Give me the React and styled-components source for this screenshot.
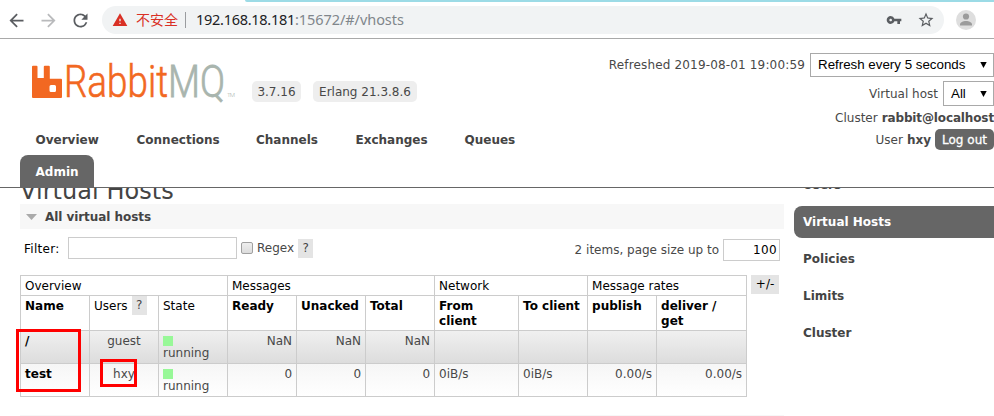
import React from 'react';
import styled, { createGlobalStyle } from 'styled-components';
import { MdArrowBack, MdArrowForward, MdRefresh, MdWarning, MdVpnKey, MdStarBorder } from 'react-icons/md';

const GlobalStyle = createGlobalStyle`
  * { box-sizing: border-box; }
  body { margin: 0; background: #fff; overflow: hidden; }
`;

const Page = styled.div`
  position: relative;
  width: 994px;
  height: 416px;
  overflow: hidden;
  background: #fff;
  color: #484848;
  font: 12px/16px 'DejaVu Sans', Verdana, sans-serif;
`;

const Text = styled.span`
  white-space: pre;
  letter-spacing: ${(p) => p.$ls || 0}px;
`;

/* Browser chrome */
const TabStrip = styled.div`
  height: 2px;
  margin-left: 245px;
  background: #9cdbe6;
  border-bottom-left-radius: 3px;
`;
const Toolbar = styled.div`
  display: flex;
  align-items: center;
  height: 37px;
  padding: 0 18px 0 0;
  border-bottom: 1px solid #a9a9a9;
`;
const NavIcon = styled.span`
  display: flex;
  justify-content: center;
  width: 32px;
  color: ${(p) => (p.$muted ? '#b9babc' : '#5a5d61')};
`;
const AddressBar = styled.div`
  display: flex;
  align-items: center;
  width: 842px;
  height: 28px;
  margin-left: 6px;
  padding: 0 9px 0 10px;
  border-radius: 14px;
  background: #f1f3f4;
  color: #5a5d61;
`;
const Insecure = styled.span`
  display: flex;
  align-items: center;
  gap: 8px;
  width: 73px;
  color: #d93025;
  white-space: nowrap;
  font: 14px/20px 'Noto Sans CJK SC', sans-serif;
  span { margin-top: -2px; }
`;
const Divider = styled.span`
  width: 1px;
  height: 16px;
  margin-right: 10px;
  background: #9a9c9f;
`;
const Url = styled.span`
  flex: 1;
  margin-top: -2px;
  color: #80868b;
  white-space: nowrap;
  letter-spacing: -0.06px;
  font: 14.5px/20px 'Noto Sans', sans-serif;
  b { font-weight: 400; color: #202124; letter-spacing: -0.28px; }
`;
const AddressActions = styled.span`
  display: flex;
  align-items: center;
  gap: 15px;
`;
const Avatar = styled.svg`
  margin-left: 12px;
`;

/* Application header */
const Header = styled.header`
  display: flex;
  justify-content: space-between;
  height: 149px;
  border-bottom: 1px solid #666;
`;
const Brand = styled.div`
  display: flex;
  align-items: flex-start;
  height: 85px;
  padding: 20px 0 0 30px;
`;
const Badge = styled.span`
  display: flex;
  align-items: center;
  justify-content: center;
  width: ${(p) => p.$w}px;
  height: 21px;
  margin: 22px 12px 0 0;
  border-radius: 5px;
  background: #eee;
`;
const Tabs = styled.nav`
  display: grid;
  grid-template-columns: 101px 119.5px 99.5px 109px 90px;
  grid-template-rows: 31px 33px;
  margin-left: 20px;
`;
const Tab = styled.a`
  display: flex;
  align-items: center;
  width: max-content;
  padding: 1px 15px 0 15.5px;
  font-weight: 700;
  color: ${(p) => (p.$active ? '#fff' : '#444')};
  background: ${(p) => (p.$active ? '#666' : 'transparent')};
  border-radius: 8px 8px 0 0;
  min-width: 74px;
`;
const Status = styled.div`
  display: flex;
  flex-direction: column;
  align-items: flex-end;
  padding-top: 14px;
`;
const StatusRow = styled.div`
  display: flex;
  align-items: center;
  gap: ${(p) => p.$gap || 5}px;
  height: ${(p) => p.$h}px;
  margin-bottom: ${(p) => p.$mb || 0}px;
`;
const Select = styled.span`
  display: flex;
  align-items: center;
  justify-content: space-between;
  width: ${(p) => p.$w}px;
  height: ${(p) => p.$h}px;
  padding: 0 5px 0 7px;
  border: 1px solid #a9a9a9;
  color: #000;
  background: #fff;
  white-space: nowrap;
  font: 13.33px/16px 'Liberation Sans', Arial, sans-serif;
`;
const Logout = styled.button`
  width: 59px;
  height: 21px;
  padding: 0;
  border: 0;
  border-radius: 5px;
  background: #666;
  color: #fff;
  white-space: nowrap;
  -webkit-text-stroke: 0.3px #fff;
  font: 400 12px/20px 'DejaVu Sans', Verdana, sans-serif;
`;

/* Body */
const Body = styled.div`
  display: flex;
  height: 228px;
  padding-left: 20px;
  overflow: hidden;
`;
const Main = styled.main`
  width: 764px;
`;
const Title = styled.h1`
  height: 28px;
  margin: -12px 0 0;
  color: #444;
  white-space: nowrap;
  letter-spacing: 0.05px;
  font: 400 24px/31px 'DejaVu Sans', Verdana, sans-serif;
`;
const SectionBar = styled.h2`
  display: flex;
  align-items: center;
  gap: 8px;
  height: 25px;
  margin: 0;
  padding-left: 6px;
  background: #f7f7f7;
  color: #444;
  font-size: 12px;
`;
const FilterRow = styled.div`
  display: flex;
  align-items: center;
  height: 22px;
  margin-top: 8px;
  padding: 0 4px;
`;
const FilterLabel = styled.label`
  width: 44px;
  padding-top: 2px;
  letter-spacing: 0.3px;
  color: #000;
`;
const Field = styled.input`
  width: ${(p) => p.$w}px;
  height: 22px;
  padding: 1px 2px 1px 3px;
  border: 1px solid #ccc;
  color: #000;
  text-align: right;
  letter-spacing: 0.4px;
  font: 12px 'DejaVu Sans', Verdana, sans-serif;
`;
const Check = styled.span`
  width: 12px;
  height: 12px;
  margin: 0 4px;
  border: 1px solid #a0a0a0;
  border-radius: 2px;
  background: linear-gradient(#eee, #dcdcdc);
`;
const Help = styled.span`
  display: inline-block;
  width: ${(p) => p.$w || 15}px;
  height: 19px;
  margin-left: ${(p) => p.$ml || 0}px;
  background: #e4e4e4;
  color: ${(p) => p.$color || '#444'};
  text-align: center;
  vertical-align: top;
  line-height: 19px;
  font-weight: 400;
`;
const PageSize = styled.span`
  display: flex;
  align-items: center;
  gap: 4px;
  margin: 3px 0 0 auto;
`;
const TableRow = styled.div`
  display: flex;
  gap: 4px;
  margin-top: 16px;
`;
const Table = styled.table`
  width: 727px;
  table-layout: fixed;
  border-spacing: 0;
  border-top: 1px solid #ccc;
  border-left: 1px solid #ccc;
`;
const Row = styled.tr`
  height: ${(p) => p.$h}px;
  background: ${(p) => p.$bg || 'none'};
`;
const Cell = styled.td`
  height: inherit;
  padding: ${(p) => p.$pt ?? 3}px 4px 0;
  border: 0 solid #ccc;
  border-width: 0 1px 1px 0;
  color: ${(p) => (p.$dark ? '#000' : '#484848')};
  font-weight: ${(p) => (p.$bold ? 700 : 400)};
  text-align: ${(p) => p.$align || 'left'};
  vertical-align: top;
  line-height: ${(p) => p.$lh || 15}px;
  white-space: pre;
`;
const StateMark = styled.span`
  display: block;
  width: 10px;
  height: 10px;
  margin: 2px 0 1px;
  background: #98f898;
`;
const NextSection = styled.div`
  height: 2px;
  margin-top: 18px;
  background: #f7f7f7;
`;
const Side = styled.aside`
  width: 200px;
  margin: -19px 0 0 10px;
`;
const SideItem = styled.a`
  display: flex;
  align-items: center;
  height: 32px;
  margin-bottom: 5px;
  padding: 0 0 1px 9px;
  border-radius: 8px 0 0 8px;
  font-weight: 700;
  background: ${(p) => (p.$active ? '#666' : 'transparent')};
  color: ${(p) => (p.$active ? '#fff' : '#444')};
`;
const Highlight = styled.div`
  position: absolute;
  left: ${(p) => p.$x}px;
  top: ${(p) => p.$y}px;
  width: ${(p) => p.$w}px;
  height: ${(p) => p.$h}px;
  border: 3px solid #f00;
`;

const Arrow = () => (
  <svg width="9" height="8" viewBox="0 0 9 8"><path d="M1.3 1h6.4L4.5 7z" fill="#000" /></svg>
);

const Logo = () => (
  <svg width="222" height="46" viewBox="30 59 222 46" fontFamily="Roboto, sans-serif" fontWeight="300">
    <path fill="#f26822" fillRule="evenodd" d="M33 65.7h3.500q1 0 1 1V78h6.300V66.700q0-1 1-1h4q1 0 1 1V78.700H61q1 0 1 1V97q0 1-1 1H33q-1 0-1-1V66.700q0-1 1-1zM51 85q-1.500 0-1.500 1.500v4q0 1.500 1.500 1.500h3.500q1.500 0 1.500-1.500v-4q0-1.500-1.500-1.500z" />
    <text x="64" y="97" fontSize="44" fill="#f26822" stroke="#f26822" strokeWidth="0.6" textLength="104" lengthAdjust="spacingAndGlyphs">Rabbit</text>
    <text x="168" y="97" fontSize="44" fill="#a9b5ae" stroke="#a9b5ae" strokeWidth="0.8" textLength="57" lengthAdjust="spacingAndGlyphs">MQ</text>
    <text x="227" y="96.500" fontSize="6" fill="#a9b5ae" textLength="8">TM</text>
  </svg>
);

const tabs = ['Overview', 'Connections', 'Channels', 'Exchanges', 'Queues', 'Admin'];
const columns = [69, 69, 69, 69, 69, 69, 84, 69, 69, 90];
const groups = [['Overview', 3], ['Messages', 3], ['Network', 2], ['Message rates', 2]];
const rows = [
  { name: '/', user: 'guest', counts: ['NaN', 'NaN', 'NaN'], net: ['', ''], rates: ['', ''], bg: 'linear-gradient(#f0f0f0, #dcdcdc)' },
  { name: 'test', user: 'hxy', counts: ['0', '0', '0'], net: ['0iB/s', '0iB/s'], rates: ['0.00/s', '0.00/s'], bg: 'linear-gradient(#f6f6f6, #fff)' },
];

export default function App() {
  return (
    <Page>
      <GlobalStyle />
      <TabStrip />
      <Toolbar>
        <NavIcon><MdArrowBack size={21} /></NavIcon>
        <NavIcon $muted><MdArrowForward size={21} /></NavIcon>
        <NavIcon><MdRefresh size={21} /></NavIcon>
        <AddressBar>
          <Insecure><MdWarning size={16} /><span>不安全</span></Insecure>
          <Divider />
          <Url><b>192.168.18.181</b>:15672/#/vhosts</Url>
          <AddressActions><MdVpnKey size={16} /><MdStarBorder size={18} /></AddressActions>
        </AddressBar>
        <Avatar width="20" height="20" viewBox="0 0 20 20">
          <circle cx="10" cy="10" r="10" fill="#dedede" />
          <circle cx="10" cy="6.500" r="3.100" fill="#9b9b9b" />
          <path d="M4 15.500v-1c0-2 3-3.500 6-3.500s6 1.500 6 3.500v1z" fill="#9b9b9b" />
        </Avatar>
      </Toolbar>

      <Header>
        <div>
          <Brand>
            <Logo />
            <Badge $w={49}><Text>3.7.16</Text></Badge>
            <Badge $w={104}><Text>Erlang 21.3.8.6</Text></Badge>
          </Brand>
          <Tabs>
            {tabs.map((t) => <Tab key={t} $active={t === 'Admin'}><Text>{t}</Text></Tab>)}
          </Tabs>
        </div>
        <Status>
          <StatusRow $h={24} $mb={4}><Text $ls={0.16}>Refreshed 2019-08-01 19:00:59</Text><Select $w={184} $h={24}>Refresh every 5 seconds<Arrow /></Select></StatusRow>
          <StatusRow $h={25} $mb={3}><Text>Virtual host</Text><Select $w={51} $h={25}>All<Arrow /></Select></StatusRow>
          <StatusRow $h={17} $gap={4}><Text>Cluster</Text><Text as="b" $ls={-0.13}>rabbit@localhost</Text></StatusRow>
          <StatusRow $h={27} $gap={4}><Text>User</Text><Text as="b">hxy</Text><Logout>Log out</Logout></StatusRow>
        </Status>
      </Header>

      <Body>
        <Main>
          <Title>Virtual Hosts</Title>
          <SectionBar>
            <svg width="11" height="6" viewBox="0 0 11 6"><path d="M0 0h11L5.500 6z" fill="#aaa" /></svg>
            <Text $ls={-0.06}>All virtual hosts</Text>
          </SectionBar>
          <FilterRow>
            <FilterLabel>Filter:</FilterLabel>
            <Field $w={169} aria-label="Filter" />
            <Check />
            <Text>Regex</Text>
            <Help $ml={4}>?</Help>
            <PageSize><Text>2 items, page size up to</Text><Field $w={57} defaultValue="100" aria-label="Page size" /></PageSize>
          </FilterRow>
          <TableRow>
            <Table>
              <colgroup>{columns.map((w, i) => <col key={i} width={w} />)}</colgroup>
              <tbody>
                <Row $h={20}>{groups.map(([g, n]) => <Cell key={g} colSpan={n} $dark>{g}</Cell>)}</Row>
                <Row $h={35}>
                  <Cell $dark $bold>Name</Cell>
                  <Cell $dark $pt={0} $lh={21}>Users<Help $ml={4}>?</Help></Cell>
                  <Cell $dark>State</Cell>
                  {['Ready', 'Unacked', 'Total', 'From\nclient', 'To client', 'publish', 'deliver /\nget'].map((h) => <Cell key={h} $dark $bold>{h}</Cell>)}
                </Row>
                {rows.map((r) => (
                  <Row key={r.name} $h={33} $bg={r.bg}>
                    <Cell $dark $bold>{r.name}</Cell>
                    <Cell $align="center">{r.user}</Cell>
                    <Cell $lh={13}><StateMark />running</Cell>
                    {r.counts.map((c, i) => <Cell key={i} $align="right">{c}</Cell>)}
                    {r.net.map((c, i) => <Cell key={i}>{c}</Cell>)}
                    {r.rates.map((c, i) => <Cell key={i} $align="right">{c}</Cell>)}
                  </Row>
                ))}
              </tbody>
            </Table>
            <Help $w={28} $color="#000">+/-</Help>
          </TableRow>
          <NextSection />
        </Main>
        <Side>
          {['Users', 'Virtual Hosts', 'Policies', 'Limits', 'Cluster'].map((s) => (
            <SideItem key={s} $active={s === 'Virtual Hosts'}><Text>{s}</Text></SideItem>
          ))}
        </Side>
      </Body>
      <Highlight $x={16} $y={329} $w={65} $h={63} />
      <Highlight $x={100} $y={359} $w={37} $h={28} />
    </Page>
  );
}
